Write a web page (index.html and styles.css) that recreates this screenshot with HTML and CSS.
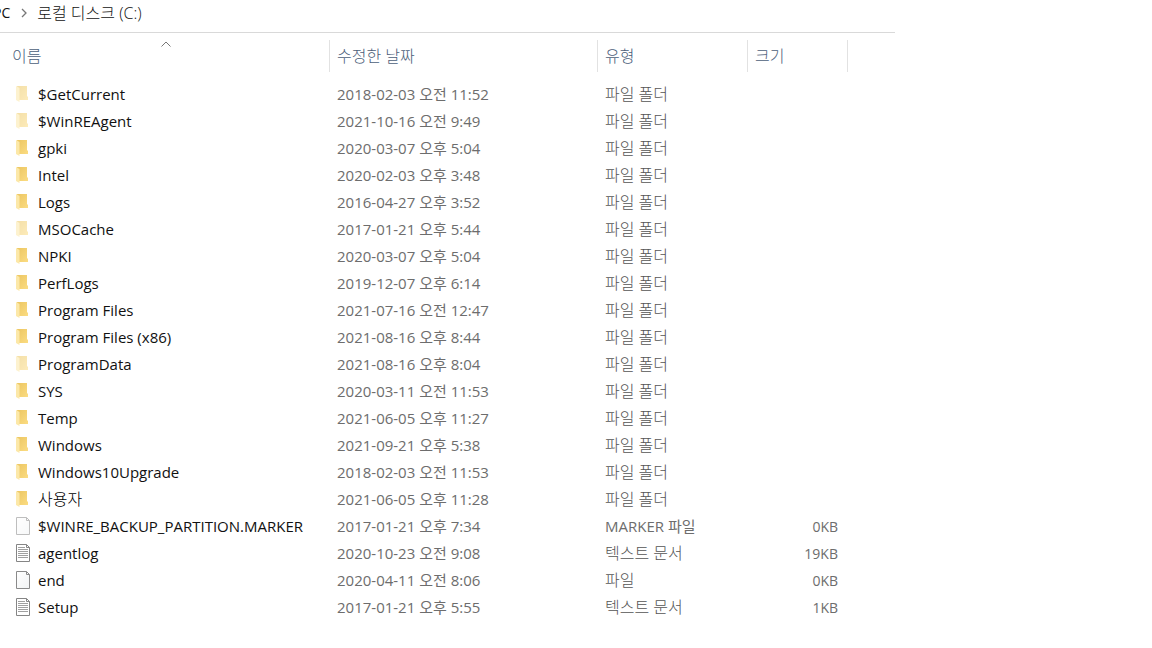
FILE: index.html
```
<!DOCTYPE html>
<html lang="ko">
<head>
    <meta charset="UTF-8">
    <meta name="viewport" content="width=device-width, initial-scale=1.0">
    <title>로컬 디스크 (C:)</title>
    <link rel="stylesheet" href="styles.css">
</head>
<body>
    <svg class="icon-defs" aria-hidden="true">
        <defs>
            <linearGradient id="back" x1="0" y1="0" x2="1" y2="1">
                <stop offset="0" stop-color="#ecc662"/>
                <stop offset="1" stop-color="#fbdc82"/>
            </linearGradient>
            <linearGradient id="paper" x1="0" y1="0" x2="1" y2="1">
                <stop offset="0" stop-color="#ffffff"/>
                <stop offset="1" stop-color="#f1f3f4"/>
            </linearGradient>
        </defs>
        <symbol id="folder" viewBox="0 0 14 18">
            <path d="M1 1h10v10.5h1V15H3z" fill="url(#back)"/>
            <path d="M0 1l3.500 2v14l-3.500-2z" fill="#fce8a8"/>
        </symbol>
        <symbol id="file" viewBox="0 0 14 18">
            <path d="M.5.5h10l3 3v14H.5z" fill="url(#paper)" stroke="#8a8a8a"/>
            <path d="M10.5.5v3h3" fill="none" stroke="#8a8a8a"/>
        </symbol>
        <symbol id="text" viewBox="0 0 14 18">
            <path d="M.5.5h10l3 3v14H.5z" fill="#fff" stroke="#858585"/>
            <path d="M10.5.5v3h3" fill="none" stroke="#858585"/>
            <path d="M2 3.5h7M2 5.5h10M2 7.5h10M2 9.5h10M2 11.5h10M2 13.5h10" stroke="#a0a0a0"/>
        </symbol>
    </svg>

    <main class="explorer">
        <nav class="address" aria-label="주소">
            <a href="#">PC</a>
            <svg class="chevron" viewBox="0 0 6 10"><path d="M1 1l4 4-4 4"/></svg>
            <a href="#" class="current">로컬 디스크 (C:)</a>
        </nav>

        <table class="files">
            <colgroup>
                <col>
                <col class="col-date">
                <col class="col-type">
                <col class="col-size">
            </colgroup>
            <thead>
                <tr>
                    <th aria-sort="ascending"><button type="button" class="first">이름</button><svg class="sort" viewBox="0 0 10 6"><path d="M.5 5.5L5 1l4.5 4.5"/></svg></th>
                    <th><button type="button">수정한 날짜</button></th>
                    <th><button type="button">유형</button></th>
                    <th><button type="button">크기</button></th>
                </tr>
            </thead>
            <tbody>
                <tr><td class="name"><svg class="icon hidden"><use href="#folder"/></svg>$GetCurrent</td><td>2018-02-03 오전 11:52</td><td class="type">파일 폴더</td><td class="size"></td></tr>
                <tr><td class="name"><svg class="icon hidden"><use href="#folder"/></svg>$WinREAgent</td><td>2021-10-16 오전 9:49</td><td class="type">파일 폴더</td><td class="size"></td></tr>
                <tr><td class="name"><svg class="icon"><use href="#folder"/></svg>gpki</td><td>2020-03-07 오후 5:04</td><td class="type">파일 폴더</td><td class="size"></td></tr>
                <tr><td class="name"><svg class="icon"><use href="#folder"/></svg>Intel</td><td>2020-02-03 오후 3:48</td><td class="type">파일 폴더</td><td class="size"></td></tr>
                <tr><td class="name"><svg class="icon"><use href="#folder"/></svg>Logs</td><td>2016-04-27 오후 3:52</td><td class="type">파일 폴더</td><td class="size"></td></tr>
                <tr><td class="name"><svg class="icon hidden"><use href="#folder"/></svg>MSOCache</td><td>2017-01-21 오후 5:44</td><td class="type">파일 폴더</td><td class="size"></td></tr>
                <tr><td class="name"><svg class="icon"><use href="#folder"/></svg>NPKI</td><td>2020-03-07 오후 5:04</td><td class="type">파일 폴더</td><td class="size"></td></tr>
                <tr><td class="name"><svg class="icon"><use href="#folder"/></svg>PerfLogs</td><td>2019-12-07 오후 6:14</td><td class="type">파일 폴더</td><td class="size"></td></tr>
                <tr><td class="name"><svg class="icon"><use href="#folder"/></svg>Program Files</td><td>2021-07-16 오전 12:47</td><td class="type">파일 폴더</td><td class="size"></td></tr>
                <tr><td class="name"><svg class="icon"><use href="#folder"/></svg>Program Files (x86)</td><td>2021-08-16 오후 8:44</td><td class="type">파일 폴더</td><td class="size"></td></tr>
                <tr><td class="name"><svg class="icon hidden"><use href="#folder"/></svg>ProgramData</td><td>2021-08-16 오후 8:04</td><td class="type">파일 폴더</td><td class="size"></td></tr>
                <tr><td class="name"><svg class="icon"><use href="#folder"/></svg>SYS</td><td>2020-03-11 오전 11:53</td><td class="type">파일 폴더</td><td class="size"></td></tr>
                <tr><td class="name"><svg class="icon"><use href="#folder"/></svg>Temp</td><td>2021-06-05 오후 11:27</td><td class="type">파일 폴더</td><td class="size"></td></tr>
                <tr><td class="name"><svg class="icon"><use href="#folder"/></svg>Windows</td><td>2021-09-21 오후 5:38</td><td class="type">파일 폴더</td><td class="size"></td></tr>
                <tr><td class="name"><svg class="icon"><use href="#folder"/></svg>Windows10Upgrade</td><td>2018-02-03 오전 11:53</td><td class="type">파일 폴더</td><td class="size"></td></tr>
                <tr><td class="name korean"><svg class="icon"><use href="#folder"/></svg>사용자</td><td>2021-06-05 오후 11:28</td><td class="type">파일 폴더</td><td class="size"></td></tr>
                <tr><td class="name"><svg class="icon hidden"><use href="#file"/></svg>$WINRE_BACKUP_PARTITION.MARKER</td><td>2017-01-21 오후 7:34</td><td>MARKER 파일</td><td class="size">0KB</td></tr>
                <tr><td class="name"><svg class="icon"><use href="#text"/></svg>agentlog</td><td>2020-10-23 오전 9:08</td><td class="type">텍스트 문서</td><td class="size">19KB</td></tr>
                <tr><td class="name"><svg class="icon"><use href="#file"/></svg>end</td><td>2020-04-11 오전 8:06</td><td class="type">파일</td><td class="size">0KB</td></tr>
                <tr><td class="name"><svg class="icon"><use href="#text"/></svg>Setup</td><td>2017-01-21 오후 5:55</td><td class="type">텍스트 문서</td><td class="size">1KB</td></tr>
            </tbody>
        </table>
    </main>
</body>
</html>
```
FILE: styles.css
```
* { box-sizing: border-box; }
body { margin: 0; background: #fff; color: #6d6d6d; font-family: "Open Sans", "Noto Sans CJK KR", sans-serif; font-size: 15px; overflow-x: hidden; }
.icon-defs { position: absolute; width: 0; height: 0; }
.explorer { max-width: 895px; }

/* address bar, scrolled so that only the end of the path shows */
.address { display: flex; align-items: center; height: 33px; margin-left: -7px; padding-bottom: 7px; border-bottom: 1px solid #d9d9d9; }
.address a { color: #111; text-decoration: none; font-size: 14px; line-height: 20px; }
.address .current { font-size: 16px; font-weight: 300; }
.chevron { width: 6px; height: 10px; margin: 0 10px 0 11px; fill: none; stroke: #777; stroke-width: 1.3; }

.files { width: 100%; margin-top: 7px; padding-right: 47px; table-layout: fixed; border-collapse: separate; border-spacing: 0; }
.col-date { width: 268px; }
.col-type { width: 150px; }
.col-size { width: 100px; }

.files th { position: relative; height: 32px; padding: 0; border-right: 1px solid #e2e2e2; text-align: left; }
.files th button { width: 100%; height: 32px; padding: 0 7px; border: none; background: none; color: #4c607a; font: inherit; font-size: 16px; font-weight: 300; line-height: 32px; text-align: left; }
.files th .first { padding-left: 12px; }
.sort { position: absolute; top: 1px; left: 50%; width: 10px; height: 6px; margin-left: -4px; fill: none; stroke: #777; }

.files tbody::before { content: ""; display: block; height: 9px; }
.files td { height: 27px; padding: 0 7px; line-height: 27px; white-space: nowrap; }
.files .name { display: flex; align-items: center; gap: 8px; padding-left: 16px; color: #111; }
.files .type, .files .korean { font-size: 16px; font-weight: 300; }
.files .type { color: #555; }
.files .korean { color: #000; }
.files .size { padding-right: 10px; font-size: 14px; text-align: right; }
.icon { flex: none; width: 14px; height: 18px; margin-bottom: 2px; }
.icon.hidden { opacity: .55; }
```
